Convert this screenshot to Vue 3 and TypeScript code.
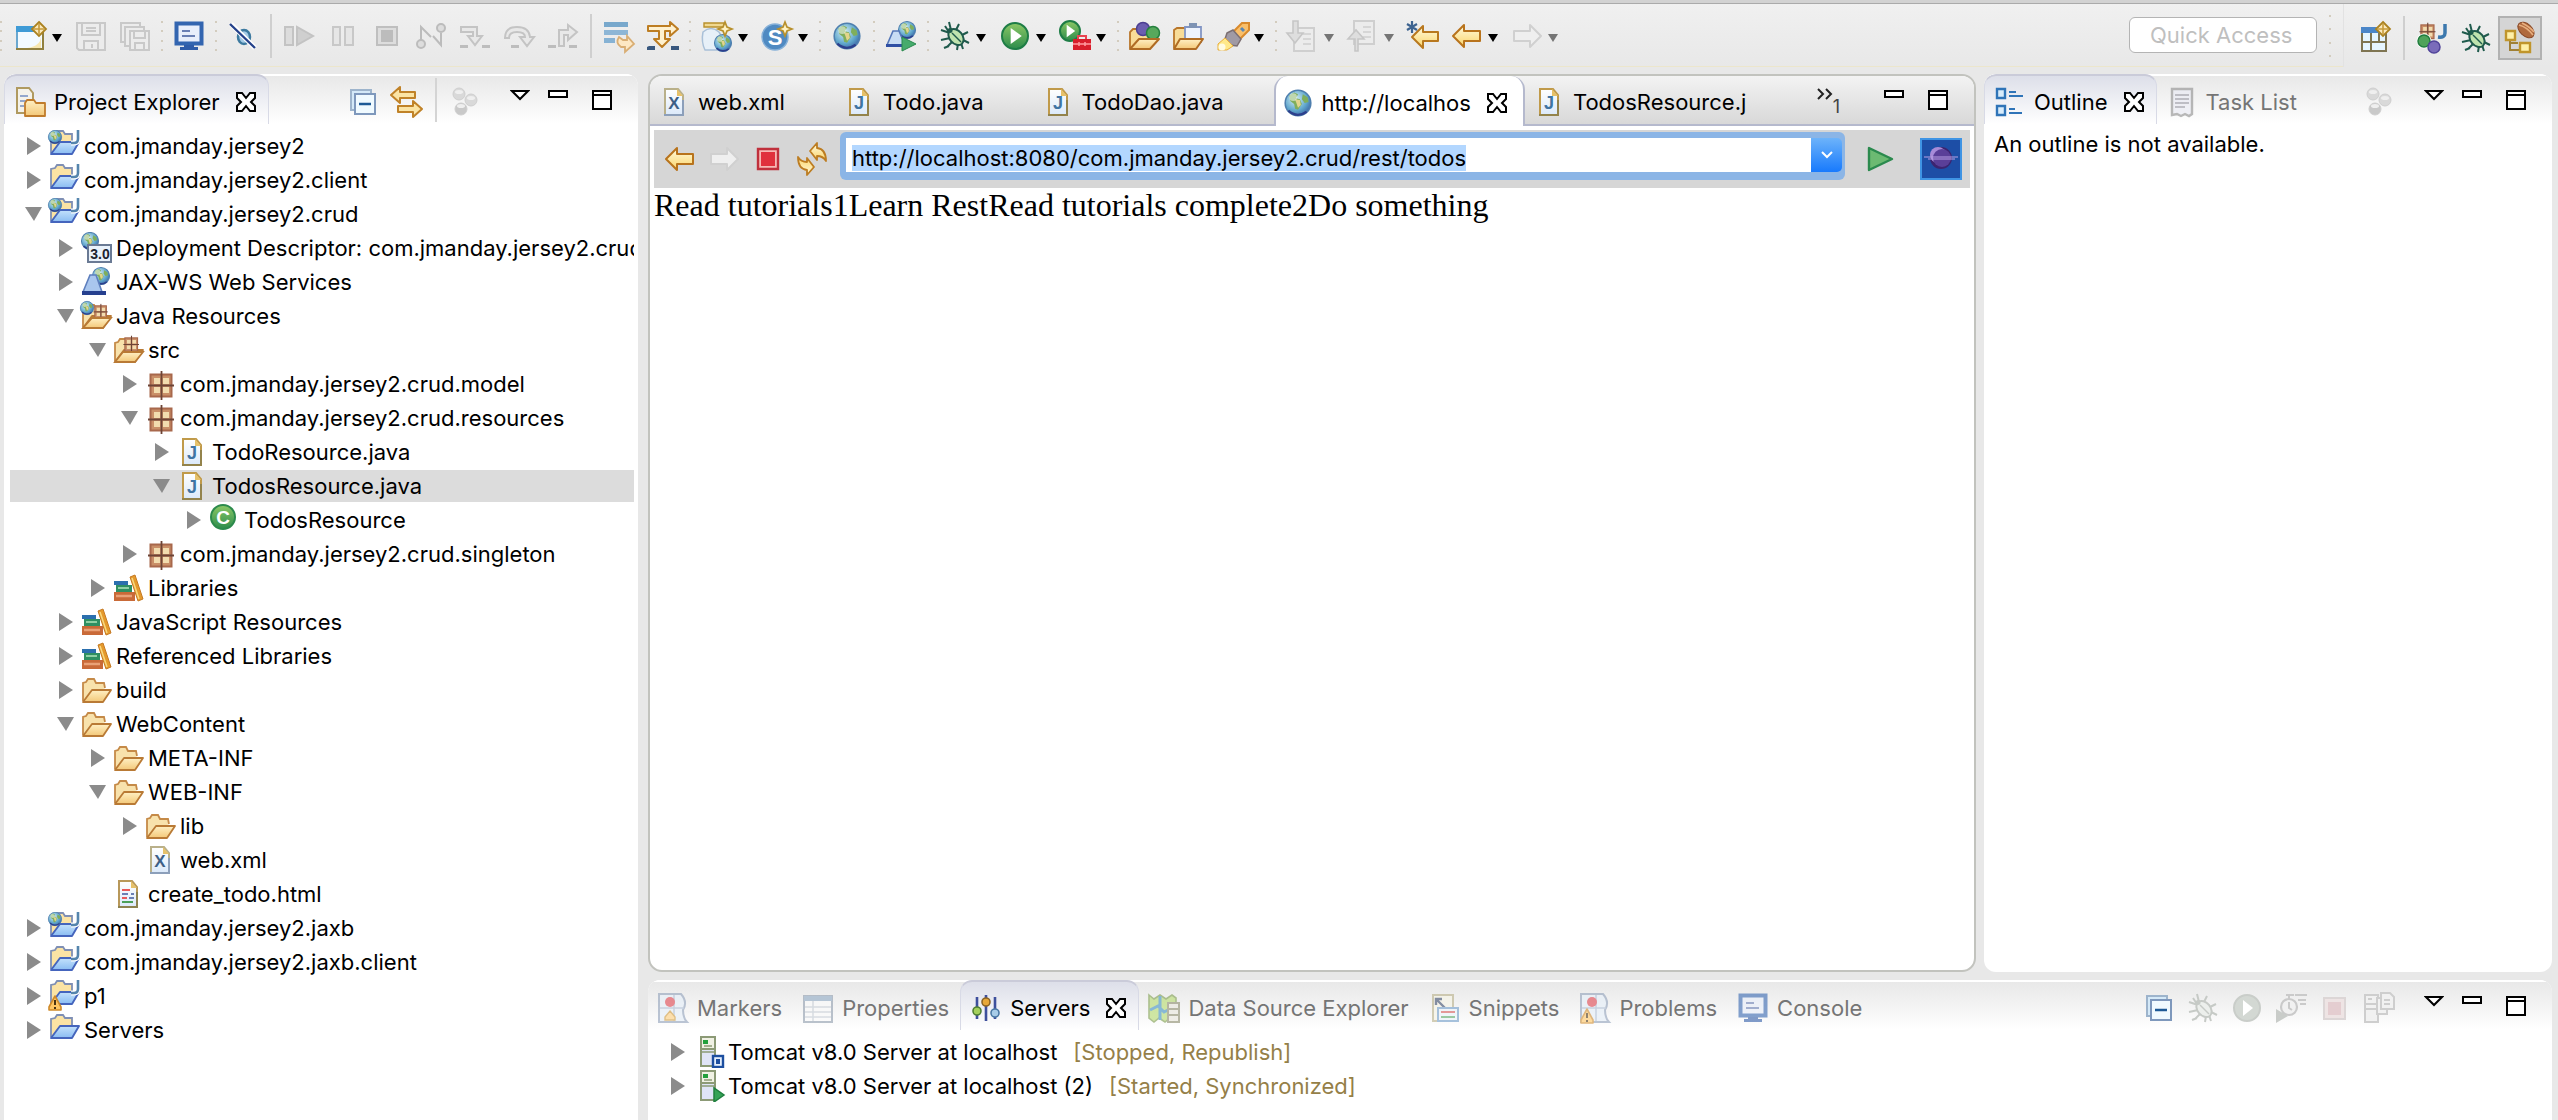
<script setup lang="ts">
import { onMounted, ref } from 'vue'

interface ToolItem {
  kind: 'button' | 'dots' | 'line'
  icon?: string
  label?: string
  menu?: boolean
  disabled?: boolean
}
interface TreeNode {
  label: string
  icon: string
  level: number
  state: 'open' | 'closed' | 'leaf'
  selected?: boolean
}
interface Tab {
  label: string
  icon: string
  active?: boolean
}

/* ---------- icon artwork, drawn on a 32 x 32 grid ---------- */
const letter = (ch: string, x: number, y: number, size: number, fill: string, family = 'Liberation Sans') =>
  `<text x="${x}" y="${y}" font-size="${size}" font-weight="700" text-anchor="middle" fill="${fill}" font-family="${family}, sans-serif">${ch}</text>`
const globe = (x: number, y: number, r: number) =>
  `<g transform="translate(${x} ${y}) scale(${r / 14})"><circle r="13.3" fill="url(#ic-globe)" stroke="#4f7fae" stroke-width="1.6"/><path d="M-9-8l5-3 4 2-2 4 4 1 2 5-4 6-3-1-1-5-4-3zM5-9l5 3 1 5-4 1-3-4z" fill="#7fae5c"/><path d="M-3-4l5 1 1 5-3 3z" fill="#e2d48c"/><path d="M-10 8q9 8 19 1" stroke="#2d3f8c" stroke-width="2.4" fill="none"/><circle cx="-5" cy="-6" r="4" fill="#fff" opacity=".5"/></g>`
const star = (x: number, y: number, r = 7) =>
  `<path transform="translate(${x} ${y})" d="M0-${r}l2 ${r - 2} ${r - 2} 2-${r - 2} 2-2 ${r - 2}-2-${r - 2}-${r - 2}-2 ${r - 2}-2z" fill="#fff3c4" stroke="#b8902c" stroke-width="1.7"/>`
const diamond = (x: number, y: number) =>
  `<path d="M${x} ${y - 7}l7 7-7 7-7-7z" fill="#fbe9bc" stroke="#ab8220" stroke-width="1.8"/><path d="M${x} ${y - 5}v10M${x - 5} ${y}h10" stroke="#c79c3a" stroke-width="1.6"/>`
const page = (stroke: string, low: string) =>
  `<path d="M7 3h13l5 6v20H7z" fill="url(#ic-page)" stroke="${stroke}" stroke-width="2"/><path d="M6 29h20M25 14v15" stroke="${low}" stroke-width="2"/><path d="M19 3v7h6z" fill="#e6c16a"/>`
const tanFolder = (dy = 0) =>
  `<g transform="translate(0 ${dy})"><path d="M3 27V9l3-1 2-3h6l2 4h8l1 5" fill="#f8e2ac" stroke="#c58a48" stroke-width="1.8"/><path d="M3 28l9-12h19l-8 12z" fill="url(#ic-tan)" stroke="#b97a35" stroke-width="1.8" stroke-linejoin="round"/></g>`
const blueFolder =
  `<path d="M3 23V5l4-1 2-3h6l2 3h7v8" fill="#fbe3a4" stroke="#7f8fb4" stroke-width="1.8"/><path d="M3 24l9-12h19l-7 12z" fill="url(#ic-blue)" stroke="#4565bd" stroke-width="1.9" stroke-linejoin="round"/>`
const projectJ = `<path d="M30 0v9q0 4-4 4h-3" fill="none" stroke="#fff" stroke-width="5"/><path d="M30 0v9q0 4-4 4h-3" fill="none" stroke="#5585ad" stroke-width="2.6"/>`
const pack = (s: number, x: number, y: number) =>
  `<g transform="translate(${x} ${y}) scale(${s})"><rect x="1.500" y="1.500" width="21" height="22" fill="#c98f68" stroke="#a8684c" stroke-width="2"/><path d="M5 5h6v6H5zM14 5h6v6h-6zM5 14h6v6H5zM14 14h6v6h-6z" fill="#f2dcae"/><path d="M12.500-2v29M-1 12.500h26" stroke="#6d4436" stroke-width="1.800"/></g>`
const bug = (ink: string, body: string) =>
  `<g fill="none" stroke="${ink}" stroke-width="2"><path d="M10 2l2 8M20 4l-3 6M2 10l9 3M2 20l9-2M8 27l5-5M18 30l1-6M24 29l-2-6M30 23l-6-3M29 12l-6 3M5 28l5-2M10 12l-4-6"/><ellipse cx="17" cy="17" rx="6.500" ry="9" transform="rotate(-40 17 17)" fill="${body}"/><path d="M13 13l9 9" stroke-width="1.400"/></g><circle cx="11" cy="10.500" r="2.500" fill="${ink}"/>`
const play = (x: number, y: number, r: number) =>
  `<circle cx="${x}" cy="${y}" r="${r}" fill="url(#ic-green)" stroke="#1e7d46" stroke-width="2"/><path d="M${x - r * 0.33} ${y - r * 0.62}l${r * 0.85} ${r * 0.62}-${r * 0.85} ${r * 0.62}z" fill="#fff"/>`
const books = `<rect x="2" y="9" width="14" height="4" fill="#2b6fae"/><rect x="4" y="13" width="16" height="7" fill="#2f8f62"/><path d="M6 16h11" stroke="#8fd0a4" stroke-width="2"/><rect x="2" y="20" width="21" height="9" fill="#c96a38"/><path d="M4 24h16" stroke="#e9a176" stroke-width="2.500"/><path d="M18 5l5-2 8 24-5 2z" fill="#e59a2c" stroke="#c67a24"/><path d="M20 6l7 21" stroke="#f8d880" stroke-width="1.500"/>`
const server = `<path d="M5 1h14v12H5z" fill="#f0f1e4" stroke="#8c9a76" stroke-width="2"/><rect x="7" y="4" width="5" height="4" fill="#23a03c"/><path d="M5 13h14v17H5z" fill="#dfe4f6" stroke="#8c9a76" stroke-width="2"/><path d="M5 16h14M8 10h8" stroke="#8c9a76" stroke-width="1.500"/>`
const leftArrow = (stroke: string, fill: string) =>
  `<path d="M2 16L13 5v6h16v10H13v6z" fill="${fill}" stroke="${stroke}" stroke-width="2" stroke-linejoin="round"/>`
const rightArrow = (stroke: string, fill: string) =>
  `<path d="M30 16L19 5v6H3v10h16v6z" fill="${fill}" stroke="${stroke}" stroke-width="2" stroke-linejoin="round"/>`
const dropNote = (flip: boolean) =>
  `<path d="M7 ${flip ? 1 : 8}h20v23H7z" fill="#ececec" stroke="#cfcfcf" stroke-width="2"/><path d="M16 ${flip ? 7 : 14}h8M16 ${flip ? 12 : 19}h8M16 ${flip ? 17 : 24}h8" stroke="#d6d6d6" stroke-width="2"/>` +
  (flip
    ? `<path d="M8 31V19H1l8-9 8 9h-6v12z" fill="#dedede" stroke="#c6c6c6" stroke-width="1.600"/>`
    : `<path d="M6 1v12H0l8 10 8-10h-5V1z" fill="#dedede" stroke="#c6c6c6" stroke-width="1.600"/>`)
const monitor = `<rect x="3.500" y="3.500" width="25" height="20" fill="#e8eefb" stroke="#3365b0" stroke-width="4"/><path d="M9 11h8M9 16h13" stroke="#6a7fb4" stroke-width="2"/><path d="M11 25h10v2H11zM7 27h18v3H7z" fill="#2f5ca8"/>`
const marker = `<path d="M2 2h22q7 8 2 16 0 8 4 12H2z" fill="#e4eef8" stroke="#8fa0ba" stroke-width="2"/><path d="M3 16h24M17 3v26" stroke="#a9b9d0" stroke-width="1.500"/><circle cx="13" cy="10" r="5" fill="#e0444e"/>`
const warn = (x: number, y: number) =>
  `<path d="M${x} ${y}l6 11v3h-12v-3z" fill="#ffc663" stroke="#cf8a2a" stroke-width="1.600" stroke-linejoin="round"/><path d="M${x} ${y + 4}v5M${x} ${y + 11}v2" stroke="#4a3212" stroke-width="2"/>`
const curl = `<path d="M14 8l7-8v5q9 1 9 13-3-5-9-5v4z" fill="url(#ic-gold)" stroke="#bd7d22" stroke-width="1.800" stroke-linejoin="round"/>`

const icons: Record<string, string> = {
  newWizard: `<path d="M2 8h26v21H2z" fill="#f3faff" stroke="#91803e" stroke-width="2"/><path d="M2 8v20" stroke="#6aa7cf" stroke-width="2"/><path d="M1 6h23v6H1z" fill="#3f9bd6"/><path d="M26 16q0 10-14 12h14z" fill="#f7e7b0"/>${diamond(24, 9)}`,
  save: `<g fill="#ececec" stroke="#c9c9c9" stroke-width="2"><path d="M2 3h28v27H4l-2-2z"/><path d="M7 3h18v12H7zM9 21h14v9H9z"/><path d="M11 8h10M11 11h10M17 24v4"/></g>`,
  saveAll: `<g fill="#ececec" stroke="#c9c9c9" stroke-width="2"><path d="M2 3h19v19H2z"/><path d="M6 7h19v19H6z"/><path d="M11 11h19v19H11z"/><path d="M15 11h11v7H15zM16 23h9v7h-9z"/></g>`,
  monitor,
  skip: `<ellipse cx="17" cy="17" rx="6" ry="7" fill="#a5cbe6" stroke="#3d7aa0" stroke-width="2.500"/><path d="M4 4l24 24" stroke="#fff" stroke-width="5"/><path d="M3 4l25 24" stroke="#24418a" stroke-width="2.400"/>`,
  resume: `<g fill="#dcdcdc" stroke="#c3c3c3" stroke-width="2"><path d="M2 7h8v18H2z"/><path d="M14 7v18l16-9z" fill="#cfcfcf"/></g>`,
  pause: `<g fill="#e6e6e6" stroke="#c8c8c8" stroke-width="2"><path d="M6 7h7v18H6zM18 7h8v18h-8z"/></g>`,
  stopOff: `<path d="M6 7h20v18H6z" fill="#ddd" stroke="#bfbfbf" stroke-width="2"/><path d="M10 10h12v12H10z" fill="#bcbcbc"/>`,
  disconnect: `<g fill="none" stroke="#bcbcbc" stroke-width="2"><path d="M6 20V7l10 10M26 13v12L18 16"/><circle cx="6" cy="24" r="4" fill="#ddd"/><circle cx="26" cy="8" r="4" fill="#ddd"/></g>`,
  stepInto: `<g fill="#e8e8e8" stroke="#c4c4c4" stroke-width="2"><path d="M2 7h16v9h5l-7 9-7-9h5v-4H2z"/></g><path d="M1 25h8v3H1zM23 25h8v3h-8z" fill="#bdbdbd"/>`,
  stepOver: `<path d="M2 18Q2 7 14 7t13 10h4l-7 9-7-9h5q0-5-8-5t-8 6z" fill="#e8e8e8" stroke="#c4c4c4" stroke-width="2"/><path d="M8 25h8v3H8z" fill="#bdbdbd"/>`,
  stepReturn: `<path d="M12 26V10h9V5l9 7-9 8v-5h-4v11z" fill="#e8e8e8" stroke="#c4c4c4" stroke-width="2"/><path d="M1 25h8v3H1zM22 25h8v3h-8z" fill="#bdbdbd"/>`,
  dropFrame: `<path d="M1 2h24v5H1z" fill="#78a8cc"/><path d="M1 10h24v5H1z" fill="#8db6d6"/><path d="M1 18h11v5H1z" fill="#86b2d4"/><path d="M16 17q-4 6 2 10h4v5l9-8-7-8v4h-4z" fill="#fde8c4" stroke="#d9ae74" stroke-width="1.800"/>`,
  stepFilter: `<path d="M1 6h22V2l8 7-8 7v-5h-5v8h5l-8 8-8-8h5v-8H1z" fill="#fff1cf" stroke="#bd7d22" stroke-width="2" stroke-linejoin="round"/><path d="M0 27l2-1h6v4H0zM24 26h8v4h-8z" fill="#39587f"/>`,
  newWeb: `<path d="M3 3h20v4H3z" fill="#f0d890" stroke="#b8902c" stroke-width="1.400"/><path d="M2 12q8-7 16 0l5 8-3 10H4q-4-8-2-18z" fill="#e7f0f8" stroke="#a9c0d8" stroke-width="1.500"/>${globe(22, 23, 9)}${star(24, 9)}`,
  newServlet: `<circle cx="14" cy="17" r="13" fill="#4f8ac2" stroke="#86b0d8" stroke-width="1.500"/>${letter('S', 14, 25, 22, '#fff')}${star(24, 9)}`,
  globe: globe(16, 16, 13.5),
  wsLaunch: `${globe(22, 10, 9)}<path d="M2 25L8 11h6l6 14z" fill="#c8dcf4" stroke="#5577b8" stroke-width="1.600"/><path d="M1 24h16v3H1z" fill="#2f4fa4"/><path d="M17 17v14l14-7z" fill="#46ab6c" stroke="#2b8a4e"/>`,
  bug: bug('#1f5a4c', '#bfe3ae'),
  run: play(16, 16, 13),
  runExt: `${play(11, 11, 10)}<path d="M14 19h18v11H14z" fill="#d81e2c"/><path d="M19 19v-3h8v3" fill="none" stroke="#e84450" stroke-width="2"/><path d="M14 24h18M20 22v4M26 22v4" stroke="#ff9ba0" stroke-width="1.500"/>`,
  openType: `<path d="M1 28V12l3-3h8l3 4h12v6" fill="#f8dc98" stroke="#b9762a" stroke-width="1.800"/><circle cx="14" cy="9" r="6.500" fill="#6b5eb0" stroke="#4c3f92" stroke-width="1.500"/><circle cx="24" cy="13" r="6.500" fill="#57a85c" stroke="#25803e" stroke-width="1.500"/><path d="M1 29l9-10h20l-9 10z" fill="url(#ic-tan)" stroke="#b06c24" stroke-width="2" stroke-linejoin="round"/>`,
  openTask: `<path d="M1 28V10l3-2h8l3 4h12v8" fill="#f8dc98" stroke="#b9762a" stroke-width="1.800"/><path d="M12 7h16v15H12z" fill="#eef3fd" stroke="#8295c4" stroke-width="1.800"/><path d="M16 3h8v5h-8z" fill="#7e93b4"/><path d="M1 29l6-10h23l-7 10z" fill="url(#ic-tan)" stroke="#b06c24" stroke-width="2" stroke-linejoin="round"/>`,
  rocket: `<path d="M16 12L25 3h7v7L22 20z" fill="#f9bf6a" stroke="#d98a2c" stroke-width="2"/><path d="M10 13l6-3 8 9-4 7-7-1-5-6z" fill="#a09aa4" stroke="#7c6f72" stroke-width="1.500"/><path d="M8 18l8 8-6 4H1v-6z" fill="#ffe98a" stroke="#e8ae3c"/><circle cx="5" cy="27" r="3.500" fill="#fffbe0"/><path d="M24 8l3 3" stroke="#5a88b4" stroke-width="3"/>`,
  nextNote: dropNote(false),
  prevNote: dropNote(true),
  lastEdit: `<path d="M5 17L16 6v6h15v9H16v7z" fill="url(#ic-gold)" stroke="#b8781e" stroke-width="2" stroke-linejoin="round"/><path d="M5 1v12M0 4l10 6M10 4L0 10" stroke="#3d6390" stroke-width="2.200"/>`,
  back: leftArrow('#b8731c', 'url(#ic-gold)'),
  forward: rightArrow('#d0d0d0', '#efefef'),
  perspective: `<path d="M2 8h24v21H2z" fill="#e5f5ff" stroke="#7f7552" stroke-width="2"/><path d="M1 5h24v6H1z" fill="#4b86c8"/><path d="M11 11v18M2 20h24M19 11v9" stroke="#7f7552" stroke-width="2"/>${diamond(23, 7)}`,
  javaPersp: `${pack(0.62, 4, 2)}<path d="M29 2v9q0 5-7 4" fill="none" stroke="#3c78ad" stroke-width="3.500"/><circle cx="8" cy="19" r="7.500" fill="#fff"/><circle cx="8" cy="19" r="6" fill="#4fa35a" stroke="#207c3e" stroke-width="1.500"/><circle cx="18" cy="25" r="6" fill="#7a6cba" stroke="#51449a" stroke-width="1.500"/>`,
  eePersp: `<path d="M6 15v13h10M6 21h8" fill="none" stroke="#a08034" stroke-width="2"/><path d="M2 9h9v9H2zM16 21h10v9H16z" fill="#fff0a8" stroke="#c0952c" stroke-width="2.400"/><ellipse cx="22" cy="8" rx="6" ry="9.500" transform="rotate(-48 22 8)" fill="#b06a3e" stroke="#8a4a28"/><path d="M15 3q8 2 14 10M18 1q8 4 12 9" stroke="#e8b080" stroke-width="1.600" fill="none"/>`,
  explorer: `<path d="M3 2h12l4 5v20H3z" fill="#f4f2ea" stroke="#b09a60" stroke-width="2"/><path d="M6 10h8M6 15h6M6 20h4" stroke="#93a7cc" stroke-width="2"/><path d="M11 30V17l2-3h7l2 3h9v13z" fill="url(#ic-tan)" stroke="#c07c2c" stroke-width="1.800" stroke-linejoin="round"/>`,
  collapse: `<path d="M4 4h20v20H4z" fill="#d4e9f8" stroke="#9db4cc" stroke-width="2"/><path d="M8 8h20v20H8z" fill="#f0faff" stroke="#7e98bc" stroke-width="2"/><path d="M12 18h12" stroke="#1d5a96" stroke-width="2.500"/>`,
  link: `<path d="M0 9l9-8v5h15v6H9v5z" fill="#fbe4a4" stroke="#c08228" stroke-width="2" stroke-linejoin="round"/><path d="M31 23l-9-8v5H7v6h15v5z" fill="#fbe4a4" stroke="#c08228" stroke-width="2" stroke-linejoin="round"/>`,
  focus: `<g fill="#d9d9d9" stroke="#cfcfcf"><circle cx="10" cy="8" r="6"/><circle cx="22" cy="14" r="6"/><circle cx="12" cy="23" r="6" fill="#c9c9c9"/></g><g fill="#efefef"><ellipse cx="10" cy="6" rx="4" ry="2"/><ellipse cx="22" cy="12" rx="4" ry="2"/><ellipse cx="12" cy="20" rx="4" ry="2"/></g>`,
  webProject: `${blueFolder}${projectJ}${globe(7, 7, 7)}`,
  javaProject: `${blueFolder}${projectJ}`,
  warnProject: `${blueFolder}${projectJ}${warn(7, 16)}`,
  project: blueFolder,
  descriptor: `${globe(10, 9, 9)}<rect x="8" y="13" width="23" height="17" fill="#e9f2fb" stroke="#6a7a94" stroke-width="2"/>${letter('3.0', 20, 27, 14, '#1c2430')}`,
  jaxws: `${globe(21, 10, 9)}<path d="M3 26L10 9h6l6 17z" fill="#a9c6ee" stroke="#5e7fbe" stroke-width="1.600"/><path d="M2 25h24v4H2z" fill="#26408f"/>`,
  javaRes: `${tanFolder()}${pack(0.55, 14, 5)}<path d="M3 28l9-10h19l-8 10z" fill="url(#ic-tan)" stroke="#b97a35" stroke-width="1.800"/>${globe(7, 8, 7)}`,
  srcFolder: `${tanFolder()}${pack(0.6, 12, 3)}<path d="M3 28l8-10h20l-8 10z" fill="url(#ic-tan)" stroke="#b97a35" stroke-width="1.800"/>`,
  package: pack(1, 5, 5),
  javaFile: `${page('#c09a4a', '#93834c')}${letter('J', 16, 23, 18, '#3f74a3')}`,
  xmlFile: `${page('#b9b08a', '#8c9fba')}${letter('X', 16, 23, 17, '#3d5f86')}`,
  htmlFile: `${page('#b8985a', '#8d8250')}<path d="M10 12h8M10 20h5" stroke="#e85a5a" stroke-width="2"/><path d="M10 16h6M19 16h3M17 20h5" stroke="#6a7fb4" stroke-width="2"/><path d="M10 24h11" stroke="#4ba05a" stroke-width="2"/>`,
  classFile: `<circle cx="15" cy="13" r="12" fill="url(#ic-green)" stroke="#2c8a4c" stroke-width="2"/>${letter('C', 15, 20, 19, '#fff')}`,
  books,
  folder: tanFolder(),
  outline: `<g fill="#d8ecfb" stroke="#2f74b8" stroke-width="2.400"><path d="M3 3h8v9H3zM3 20h8v9H3z"/></g><path d="M15 6h7M15 10h14M15 23h6M15 27h13" stroke="#2f74b8" stroke-width="2"/>`,
  taskList: `<path d="M6 3h20v25l-3 2-4-2-4 2-4-2-5 1z" fill="#e9eaf4" stroke="#8c8c8c" stroke-width="2.400"/><path d="M9 9h14M9 13h14M9 17h14M9 21h10" stroke="#80808c" stroke-width="1.600"/>`,
  stop: `<path d="M6 6h20v20H6z" fill="#f6b8b4" stroke="#c0303c" stroke-width="2.400"/><path d="M9 9h14v14H9z" fill="#e0303c"/>`,
  refresh: `${curl}<g transform="rotate(180 16 16)">${curl}</g>`,
  go: `<path d="M5 5v22l23-11z" fill="#6cba72" stroke="#2b8a4e" stroke-width="2.400" stroke-linejoin="round"/>`,
  markers: `${marker}<path d="M13 19l5 6v3H8v-3z" fill="#ffcf7c" stroke="#cf9a3a" stroke-width="1.400"/>`,
  problems: `${marker}${warn(8, 17)}`,
  properties: `<path d="M2 4h28v26H2z" fill="#fbfbfb" stroke="#8e9cac" stroke-width="2"/><path d="M2 4h28v5H2z" fill="#8ea8c4"/><path d="M11 9v20M3 15h26M3 20h26M3 25h26" stroke="#c2cad4" stroke-width="1.500"/>`,
  servers: `<path d="M7 5v22M16 3v26M25 5v22" stroke="#3d4f9c" stroke-width="2.600"/><circle cx="7" cy="19" r="4" fill="#a4d05c" stroke="#4f7f34" stroke-width="1.600"/><circle cx="16" cy="10" r="4" fill="#e8a838" stroke="#8c6424" stroke-width="1.600"/><circle cx="25" cy="21" r="4" fill="#a8cce8" stroke="#4a78a4" stroke-width="1.600"/>`,
  dataSource: `<path d="M1 3l5 4 6-4 6 4 6-4 4 3v22l-6-2-5 4-6-4-5 4-5-4z" fill="#b4da6c" stroke="#7c9c4c" stroke-width="1.600"/><path d="M2 18l8-4 6 6 6-3M12 4v24" stroke="#3f8fc0" stroke-width="3" fill="none"/><path d="M20 11h11v19H20z" fill="#e8e6da" stroke="#8a8a6c" stroke-width="2"/><path d="M21 17h9M21 23h9" stroke="#8a8a6c" stroke-width="2"/>`,
  snippets: `<path d="M4 3h20v26H4z" fill="#f6f3e4" stroke="#b8b088" stroke-width="2"/><path d="M7 7l9 9M7 13V7h6" fill="none" stroke="#3a4a6c" stroke-width="2.400"/><path d="M9 16h20v13H9z" fill="#eaf3fc" stroke="#6f9cc8" stroke-width="2"/><path d="M12 20h14" stroke="#d85a5a" stroke-width="2"/><path d="M12 25h14" stroke="#5aa86a" stroke-width="2"/>`,
  bugOff: bug('#c6cac6', '#ecefec'),
  runOff: `<circle cx="16" cy="16" r="13" fill="#d3d8d3" stroke="#c9cdc9" stroke-width="2"/><path d="M12 8l10 8-10 8z" fill="#fff"/>`,
  profileOff: `<circle cx="14" cy="15" r="8" fill="#f1f1f1" stroke="#cacaca" stroke-width="2.200"/><path d="M14 10v6l3 2M11 3h8M14 3v4M20 3h12M23 8h8M25 12h6" stroke="#cacaca" stroke-width="2" fill="none"/><path d="M1 17v14l12-7z" fill="#c9ccc9"/>`,
  stopPale: `<path d="M5 6h21v21H5z" fill="#eee4e4" stroke="#dcd6d6" stroke-width="2"/><path d="M9 10h13v13H9z" fill="#e4cdd0"/>`,
  publishOff: `<g fill="#f1f1f1" stroke="#cecece" stroke-width="2"><path d="M2 3h13v27H2z"/><path d="M2 12h13M2 17h13M5 7h4"/><path d="M14 6h10v16H14z"/><path d="M18 1h9l4 4v12H18z"/><path d="M21 8h6M21 12h6"/></g>`,
  serverStopped: `${server}<rect x="17" y="20" width="10" height="11" fill="#e4eefc" stroke="#1d4fa0" stroke-width="2.400"/><rect x="20" y="23" width="4" height="5" fill="#1d4fa0"/>`,
  serverStarted: `${server}<path d="M18 18v14l10-7z" fill="#35a356" stroke="#1f7f3e" stroke-width="1.500"/>`,
}

/* ---------- window content ---------- */
const b = (icon: string, label: string, menu = false, disabled = false): ToolItem => ({ kind: 'button', icon, label, menu, disabled })
const dots: ToolItem = { kind: 'dots' }
const line: ToolItem = { kind: 'line' }
const tools: ToolItem[] = [
  dots,
  b('newWizard', 'New', true),
  b('save', 'Save', false, true),
  b('saveAll', 'Save All', false, true),
  dots,
  b('monitor', 'Open Console'),
  dots,
  b('skip', 'Skip All Breakpoints'),
  line,
  b('resume', 'Resume', false, true),
  b('pause', 'Suspend', false, true),
  b('stopOff', 'Terminate', false, true),
  b('disconnect', 'Disconnect', false, true),
  b('stepInto', 'Step Into', false, true),
  b('stepOver', 'Step Over', false, true),
  b('stepReturn', 'Step Return', false, true),
  line,
  b('dropFrame', 'Drop to Frame'),
  b('stepFilter', 'Use Step Filters'),
  dots,
  b('newWeb', 'New Web Project', true),
  b('newServlet', 'New Servlet', true),
  dots,
  b('globe', 'Open Web Browser'),
  dots,
  b('wsLaunch', 'Web Services Explorer'),
  dots,
  b('bug', 'Debug', true),
  b('run', 'Run', true),
  b('runExt', 'External Tools', true),
  dots,
  b('openType', 'Open Type'),
  b('openTask', 'Open Task'),
  b('rocket', 'Search', true),
  dots,
  b('nextNote', 'Next Annotation', true, true),
  b('prevNote', 'Previous Annotation', true, true),
  b('lastEdit', 'Last Edit Location'),
  b('back', 'Back', true),
  b('forward', 'Forward', true, true),
]

const n = (level: number, icon: string, label: string, state: TreeNode['state'] = 'closed', selected = false): TreeNode => ({ level, icon, label, state, selected })
const tree: TreeNode[] = [
  n(0, 'webProject', 'com.jmanday.jersey2'),
  n(0, 'javaProject', 'com.jmanday.jersey2.client'),
  n(0, 'webProject', 'com.jmanday.jersey2.crud', 'open'),
  n(1, 'descriptor', 'Deployment Descriptor: com.jmanday.jersey2.crud'),
  n(1, 'jaxws', 'JAX-WS Web Services'),
  n(1, 'javaRes', 'Java Resources', 'open'),
  n(2, 'srcFolder', 'src', 'open'),
  n(3, 'package', 'com.jmanday.jersey2.crud.model'),
  n(3, 'package', 'com.jmanday.jersey2.crud.resources', 'open'),
  n(4, 'javaFile', 'TodoResource.java'),
  n(4, 'javaFile', 'TodosResource.java', 'open', true),
  n(5, 'classFile', 'TodosResource'),
  n(3, 'package', 'com.jmanday.jersey2.crud.singleton'),
  n(2, 'books', 'Libraries'),
  n(1, 'books', 'JavaScript Resources'),
  n(1, 'books', 'Referenced Libraries'),
  n(1, 'folder', 'build'),
  n(1, 'folder', 'WebContent', 'open'),
  n(2, 'folder', 'META-INF'),
  n(2, 'folder', 'WEB-INF', 'open'),
  n(3, 'folder', 'lib'),
  n(3, 'xmlFile', 'web.xml', 'leaf'),
  n(2, 'htmlFile', 'create_todo.html', 'leaf'),
  n(0, 'webProject', 'com.jmanday.jersey2.jaxb'),
  n(0, 'javaProject', 'com.jmanday.jersey2.jaxb.client'),
  n(0, 'warnProject', 'p1'),
  n(0, 'project', 'Servers'),
]

const editorTabs: Tab[] = [
  { label: 'web.xml', icon: 'xmlFile' },
  { label: 'Todo.java', icon: 'javaFile' },
  { label: 'TodoDao.java', icon: 'javaFile' },
  { label: 'http://localhos', icon: 'globe', active: true },
  { label: 'TodosResource.j', icon: 'javaFile' },
]
const bottomTabs: Tab[] = [
  { label: 'Markers', icon: 'markers' },
  { label: 'Properties', icon: 'properties' },
  { label: 'Servers', icon: 'servers', active: true },
  { label: 'Data Source Explorer', icon: 'dataSource' },
  { label: 'Snippets', icon: 'snippets' },
  { label: 'Problems', icon: 'problems' },
  { label: 'Console', icon: 'monitor' },
]
const outlineTabs: Tab[] = [
  { label: 'Outline', icon: 'outline', active: true },
  { label: 'Task List', icon: 'taskList' },
]
const serverTools = ['collapse', 'bugOff', 'runOff', 'profileOff', 'stopPale', 'publishOff']
const servers = [
  { name: 'Tomcat v8.0 Server at localhost', status: '[Stopped, Republish]', icon: 'serverStopped' },
  { name: 'Tomcat v8.0 Server at localhost (2)', status: '[Started, Synchronized]', icon: 'serverStarted' },
]

const url = ref('http://localhost:8080/com.jmanday.jersey2.crud/rest/todos')
const urlBox = ref<HTMLInputElement | null>(null)
onMounted(() => {
  urlBox.value?.focus({ preventScroll: true })
  urlBox.value?.select()
})
</script>

<template>
  <div class="app">
    <svg class="defs" aria-hidden="true">
      <defs>
        <radialGradient id="ic-globe" cx=".4" cy=".35" r=".75"><stop offset="0" stop-color="#d8f0f4" /><stop offset=".6" stop-color="#5fa6cc" /><stop offset="1" stop-color="#34579c" /></radialGradient>
        <linearGradient id="ic-page" x1="0" y1="0" x2="0" y2="1"><stop offset="0" stop-color="#fff" /><stop offset="1" stop-color="#dbe9fa" /></linearGradient>
        <linearGradient id="ic-tan" x1="0" y1="0" x2="0" y2="1"><stop offset="0" stop-color="#fff0c4" /><stop offset="1" stop-color="#f3c878" /></linearGradient>
        <linearGradient id="ic-blue" x1="0" y1="0" x2="0" y2="1"><stop offset="0" stop-color="#c4e2fc" /><stop offset="1" stop-color="#8abcf2" /></linearGradient>
        <linearGradient id="ic-green" x1="0" y1="0" x2="0" y2="1"><stop offset="0" stop-color="#8cc865" /><stop offset="1" stop-color="#2c8c4c" /></linearGradient>
        <linearGradient id="ic-gold" x1="0" y1="0" x2="0" y2="1"><stop offset="0" stop-color="#fffbe0" /><stop offset="1" stop-color="#fbd468" /></linearGradient>
      </defs>
    </svg>

    <header class="toolbar">
      <div class="tools">
        <template v-for="(t, i) in tools" :key="i">
          <span v-if="t.kind === 'dots'" class="dots" :class="{ first: i === 0 }"><i /><i /><i /><i /></span>
          <span v-else-if="t.kind === 'line'" class="line" />
          <button v-else class="tool" :class="{ menu: t.menu }" :disabled="t.disabled" :aria-label="t.label">
            <svg class="icon" viewBox="0 0 32 32" v-html="icons[t.icon!]" />
            <svg v-if="t.menu" class="caret" viewBox="0 0 10 8"><path d="M0 0h10L5 8z" /></svg>
          </button>
        </template>
        <input class="quick" type="text" placeholder="Quick Access" aria-label="Quick Access" />
        <span class="dots wide"><i /><i /><i /><i /></span>
      </div>
      <nav class="perspectives" aria-label="Perspectives">
        <button class="tool" aria-label="Open Perspective"><svg class="icon" viewBox="0 0 32 32" v-html="icons.perspective" /></button>
        <span class="line" />
        <button class="tool" aria-label="Java"><svg class="icon" viewBox="0 0 32 32" v-html="icons.javaPersp" /></button>
        <button class="tool" aria-label="Debug perspective"><svg class="icon" viewBox="0 0 32 32" v-html="icons.bug" /></button>
        <button class="tool pressed" aria-label="Java EE"><svg class="icon" viewBox="0 0 32 32" v-html="icons.eePersp" /></button>
      </nav>
    </header>

    <main class="workbench">
      <section class="view explorer">
        <div class="view-head">
          <div class="tab active">
            <svg class="icon" viewBox="0 0 32 32" v-html="icons.explorer" />
            <button class="tab-label">Project Explorer</button>
            <button class="close" aria-label="Close Project Explorer"><svg viewBox="0 0 20 20"><path d="M1 1h5l4 5 4-5h5v5l-4 4 4 4v5h-5l-4-5-4 5H1v-5l4-4-4-4z" /></svg></button>
          </div>
          <div class="view-tools">
            <button class="mini" aria-label="Collapse All"><svg class="icon" viewBox="0 0 32 32" v-html="icons.collapse" /></button>
            <button class="mini" aria-label="Link with Editor"><svg class="icon" viewBox="0 0 32 32" v-html="icons.link" /></button>
            <span class="head-line" />
            <button class="mini" aria-label="Focus on Active Task" disabled><svg class="icon" viewBox="0 0 32 32" v-html="icons.focus" /></button>
          </div>
          <div class="win">
            <button aria-label="View Menu"><svg viewBox="0 0 20 20"><path d="M2 1h16l-8 8z" /></svg></button>
            <button aria-label="Minimize"><svg viewBox="0 0 20 20"><path d="M1 1h18v6H1z" /></svg></button>
            <button class="max" aria-label="Maximize"><svg viewBox="0 0 20 20"><path d="M1 1h18v18H1zM1 5h18" /></svg></button>
          </div>
        </div>
        <ul class="tree" role="tree">
          <li
            v-for="node in tree"
            :key="node.label"
            role="treeitem"
            :aria-selected="node.selected"
            :class="{ selected: node.selected }"
            :style="{ paddingLeft: 14 + node.level * 32 + 'px' }"
          >
            <span v-if="node.state === 'leaf'" class="twist" />
            <button v-else class="twist" :aria-label="'Toggle ' + node.label">
              <svg viewBox="0 0 20 20"><path :d="node.state === 'open' ? 'M1 3h17l-8 14z' : 'M3 1v18l14-9z'" /></svg>
            </button>
            <svg class="icon" viewBox="0 0 32 32" v-html="icons[node.icon]" />
            <span class="node-label">{{ node.label }}</span>
          </li>
        </ul>
      </section>

      <div class="right">
        <div class="upper">
          <section class="editor">
            <div class="editor-head">
              <div v-for="t in editorTabs" :key="t.label" class="etab" :class="{ active: t.active }">
                <svg class="icon" viewBox="0 0 32 32" v-html="icons[t.icon]" />
                <button class="tab-label">{{ t.label }}</button>
                <button class="close" :aria-label="'Close ' + t.label"><svg viewBox="0 0 20 20"><path d="M1 1h5l4 5 4-5h5v5l-4 4 4 4v5h-5l-4-5-4 5H1v-5l4-4-4-4z" /></svg></button>
              </div>
              <div class="editor-tools">
                <button class="more" aria-label="Show 1 more editor">
                  <svg viewBox="0 0 16 12"><path d="M1 1l5 5-5 5M9 1l5 5-5 5" /></svg><span>1</span>
                </button>
                <div class="win">
                  <button aria-label="Minimize editor"><svg viewBox="0 0 20 20"><path d="M1 1h18v6H1z" /></svg></button>
                  <button class="max" aria-label="Maximize editor"><svg viewBox="0 0 20 20"><path d="M1 1h18v18H1zM1 5h18" /></svg></button>
                </div>
              </div>
            </div>
            <div class="browser-bar">
              <button class="mini" aria-label="Go back"><svg class="icon" viewBox="0 0 32 32" v-html="icons.back" /></button>
              <button class="mini" aria-label="Go forward" disabled><svg class="icon" viewBox="0 0 32 32" v-html="icons.forward" /></button>
              <button class="mini" aria-label="Stop"><svg class="icon" viewBox="0 0 32 32" v-html="icons.stop" /></button>
              <button class="mini" aria-label="Refresh"><svg class="icon" viewBox="0 0 32 32" v-html="icons.refresh" /></button>
              <div class="combo">
                <input ref="urlBox" v-model="url" type="text" spellcheck="false" aria-label="Address" />
                <button aria-label="Show address history"><svg viewBox="0 0 14 10"><path d="M2 2l5 5 5-5" /></svg></button>
              </div>
              <button class="mini go" aria-label="Go"><svg class="icon" viewBox="0 0 32 32" v-html="icons.go" /></button>
              <svg class="eclipse" viewBox="0 0 42 42">
                <rect width="42" height="42" fill="#1d4ea6" /><path d="M1 1h40v40H1z" fill="none" stroke="#3f94e4" stroke-width="2" />
                <circle cx="21" cy="20" r="11" fill="#3c2470" /><circle cx="18" cy="17" r="8" fill="#a78bd8" /><circle cx="22" cy="20" r="9" fill="#5a3f98" />
                <path d="M4 19h34M8 21h27" stroke="#b9a0e4" stroke-width="1" />
              </svg>
            </div>
            <div class="page">Read tutorials1Learn RestRead tutorials complete2Do something</div>
          </section>

          <section class="view outline">
            <div class="view-head">
              <div v-for="t in outlineTabs" :key="t.label" class="tab" :class="{ active: t.active }">
                <svg class="icon" viewBox="0 0 32 32" v-html="icons[t.icon]" />
                <button class="tab-label">{{ t.label }}</button>
                <button v-if="t.active" class="close" :aria-label="'Close ' + t.label"><svg viewBox="0 0 20 20"><path d="M1 1h5l4 5 4-5h5v5l-4 4 4 4v5h-5l-4-5-4 5H1v-5l4-4-4-4z" /></svg></button>
              </div>
              <div class="view-tools">
                <button class="mini" aria-label="Focus on Workweek" disabled><svg class="icon" viewBox="0 0 32 32" v-html="icons.focus" /></button>
              </div>
              <div class="win">
                <button aria-label="Outline menu"><svg viewBox="0 0 20 20"><path d="M2 1h16l-8 8z" /></svg></button>
                <button aria-label="Minimize outline"><svg viewBox="0 0 20 20"><path d="M1 1h18v6H1z" /></svg></button>
                <button class="max" aria-label="Maximize outline"><svg viewBox="0 0 20 20"><path d="M1 1h18v18H1zM1 5h18" /></svg></button>
              </div>
            </div>
            <p class="note">An outline is not available.</p>
          </section>
        </div>

        <section class="view bottom">
          <div class="view-head">
            <div v-for="t in bottomTabs" :key="t.label" class="tab" :class="{ active: t.active }">
              <svg class="icon" viewBox="0 0 32 32" v-html="icons[t.icon]" />
              <button class="tab-label">{{ t.label }}</button>
              <button v-if="t.active" class="close" :aria-label="'Close ' + t.label"><svg viewBox="0 0 20 20"><path d="M1 1h5l4 5 4-5h5v5l-4 4 4 4v5h-5l-4-5-4 5H1v-5l4-4-4-4z" /></svg></button>
            </div>
            <div class="view-tools">
              <button v-for="s in serverTools" :key="s" class="mini" :aria-label="s"><svg class="icon" viewBox="0 0 32 32" v-html="icons[s]" /></button>
            </div>
            <div class="win">
              <button aria-label="Servers menu"><svg viewBox="0 0 20 20"><path d="M2 1h16l-8 8z" /></svg></button>
              <button aria-label="Minimize servers"><svg viewBox="0 0 20 20"><path d="M1 1h18v6H1z" /></svg></button>
              <button class="max" aria-label="Maximize servers"><svg viewBox="0 0 20 20"><path d="M1 1h18v18H1zM1 5h18" /></svg></button>
            </div>
          </div>
          <ul class="tree servers">
            <li v-for="s in servers" :key="s.name">
              <button class="twist" :aria-label="'Toggle ' + s.name"><svg viewBox="0 0 20 20"><path d="M3 1v18l14-9z" /></svg></button>
              <svg class="icon" viewBox="0 0 32 32" v-html="icons[s.icon]" />
              <span class="node-label">{{ s.name }}</span>
              <span class="status">{{ s.status }}</span>
            </li>
          </ul>
        </section>
      </div>
    </main>
  </div>
</template>

<style>
body {
  margin: 0;
}
</style>

<style scoped>
.app {
  display: flex;
  flex-direction: column;
  box-sizing: border-box;
  min-height: 100vh;
  background: #e8e8e8;
  border-top: 3px solid #d2d2d2;
  color: #000;
  font-family: Inter, 'Open Sans', sans-serif;
  font-size: 22px;
  line-height: 32px;
}
.defs {
  position: absolute;
  width: 0;
  height: 0;
}
button,
input {
  margin: 0;
  padding: 0;
  border: 0;
  background: none;
  color: inherit;
  font: inherit;
  outline: none;
}
.icon {
  flex: none;
  display: block;
  width: 32px;
  height: 32px;
  overflow: visible;
}

/* main toolbar */
.toolbar {
  display: flex;
  border-top: 1px solid #aaa;
  background: linear-gradient(#f0f0f0, #e8e8e8);
}
.tools {
  flex: 1;
  display: flex;
  align-items: flex-start;
  min-width: 0;
  padding: 10px 0 8px;
  border-bottom: 1px solid #ece6cc;
}
.tool {
  flex: none;
  display: flex;
  align-items: center;
  box-sizing: border-box;
  width: 44px;
  height: 44px;
  padding: 0 6px;
}
.tool.menu {
  width: 60px;
}
.caret {
  flex: none;
  width: 10px;
  height: 8px;
  margin: 4px 0 0 5px;
}
.tool:disabled .caret {
  opacity: 0.5;
}
.dots {
  flex: none;
  display: flex;
  flex-direction: column;
  align-items: center;
  justify-content: space-between;
  width: 10px;
  height: 30px;
  padding: 7px 0;
}
.dots.first {
  width: 9px;
  align-items: flex-start;
}
.dots i {
  width: 2px;
  height: 2px;
  background: #d3ccbe;
}
.dots.wide {
  width: 26px;
  height: 42px;
  padding: 1px 0;
}
.line {
  flex: none;
  width: 2px;
  height: 44px;
  margin: 0 5px;
  background: #cfcfcf;
}
.quick {
  box-sizing: border-box;
  width: 188px;
  height: 36px;
  margin: 3px 0 0 auto;
  padding: 0 20px;
  border: 1px solid #b4b4b4;
  border-radius: 6px;
  background: #fff;
}
.quick::placeholder {
  color: #bfbfbf;
}
.perspectives {
  flex: none;
  display: flex;
  padding: 12px 16px 0 10px;
  border-left: 1px solid #e2e2e2;
}
.pressed {
  padding: 0 4px;
  border: 2px solid #b2b2b2;
  background: #d5d5d5;
}

/* workbench grid */
.workbench {
  flex: 1;
  display: grid;
  grid-template-columns: minmax(0, 634fr) minmax(0, 1904fr);
  gap: 10px;
  padding: 7px 6px 0 4px;
}
.right {
  display: flex;
  flex-direction: column;
  gap: 8px;
}
.upper {
  flex: 1;
  display: grid;
  grid-template-columns: minmax(0, 1328fr) minmax(0, 568fr);
  gap: 8px;
}

/* views */
.view {
  display: flex;
  flex-direction: column;
  border-radius: 12px;
  background: #fff;
  overflow: hidden;
}
.explorer,
.bottom {
  border-radius: 12px 12px 0 0;
}
.view-head {
  display: flex;
  height: 48px;
  border-top: 2px solid #fff;
  background: linear-gradient(#e8e8e8, #fff);
}
.tab {
  flex: none;
  display: flex;
  align-items: center;
  gap: 8px;
  box-sizing: border-box;
  height: 48px;
  padding: 4px 11px 0 9px;
  color: #757575;
  white-space: nowrap;
}
.tab .icon {
  opacity: 0.6;
}
.tab.active {
  height: 50px;
  margin-top: -2px;
  padding: 4px 12px 0 9px;
  border: 1px solid #d8dae6;
  border-top: 2px solid #cacbd9;
  border-bottom: 0;
  border-radius: 12px 12px 0 0;
  background: linear-gradient(#dddfe9, #fff);
  color: #000;
}
.tab.active .icon {
  opacity: 1;
}
.close {
  flex: none;
  width: 20px;
  height: 20px;
  margin-left: 8px;
}
.close svg,
.win svg {
  display: block;
  width: 20px;
  height: 20px;
  fill: #fff;
  stroke: #000;
  stroke-width: 2;
}
.view-tools {
  display: flex;
  gap: 12px;
  margin-left: auto;
  padding-top: 10px;
}
.mini {
  flex: none;
  width: 32px;
  height: 32px;
}
.head-line {
  width: 2px;
  height: 44px;
  margin-top: -8px;
  background: #d4d4d4;
}
.win {
  display: flex;
  gap: 18px;
  padding: 14px 26px 0 29px;
}
.win button {
  width: 20px;
  height: 20px;
}
.win .max {
  margin-left: 6px;
}

/* trees */
.tree {
  display: flex;
  flex-direction: column;
  gap: 2px;
  margin: 0;
  padding: 6px 4px 18px 6px;
  list-style: none;
}
.tree li {
  display: flex;
  align-items: center;
  height: 32px;
  white-space: nowrap;
  overflow: hidden;
}
.tree .selected {
  background: #dcdcdc;
}
.twist {
  flex: none;
  width: 20px;
  height: 20px;
  margin-right: 4px;
}
.twist svg {
  display: block;
  width: 20px;
  height: 20px;
  fill: #8b8b8b;
}
.node-label {
  margin-left: 4px;
}
.servers {
  padding-left: 20px;
}
.servers .twist {
  margin-right: 8px;
}
.servers .node-label {
  margin-left: 0;
}
.status {
  margin-left: 16px;
  color: #957f48;
}

/* editor area */
.editor {
  display: flex;
  flex-direction: column;
  border: 2px solid #c2c3be;
  border-radius: 14px;
  background: #fff;
  overflow: hidden;
}
.editor-head {
  display: flex;
  height: 50px;
  background: linear-gradient(#f3f3f3, #d7d7d7);
}
.etab {
  flex: none;
  display: flex;
  align-items: center;
  gap: 8px;
  box-sizing: border-box;
  height: 50px;
  padding: 4px 14px 0 8px;
  border-bottom: 2px solid #b5b9cd;
  white-space: nowrap;
}
.etab .close {
  visibility: hidden;
}
.etab.active {
  padding: 4px 16px 0 6px;
  border: 2px solid #b5b9cd;
  border-top: 0;
  border-bottom: 0;
  border-radius: 14px 14px 0 0;
  background: #fff;
}
.etab.active .close {
  visibility: visible;
}
.editor-tools {
  flex: 1;
  display: flex;
  justify-content: flex-end;
  border-bottom: 2px solid #b5b9cd;
}
.more {
  display: flex;
  align-items: flex-start;
  height: 40px;
  padding-top: 12px;
  color: #444;
}
.more svg {
  width: 16px;
  height: 12px;
  fill: none;
  stroke: #222;
  stroke-width: 2;
}
.more span {
  margin-top: 9px;
  font-size: 18px;
  line-height: 20px;
}
.editor-tools .win {
  padding: 14px 26px 0 44px;
}
.browser-bar {
  display: flex;
  align-items: center;
  gap: 12px;
  height: 58px;
  margin: 4px 4px 0;
  padding: 0 8px 0 10px;
  background: #d6d6d6;
}
.combo {
  flex: 1;
  display: flex;
  box-sizing: border-box;
  height: 48px;
  margin: 0 7px 6px 0;
  padding: 6px 3px 8px 6px;
  border-radius: 6px;
  background: #8bb5e6;
}
.combo input {
  flex: 1;
  min-width: 0;
  padding: 5px 6px 0;
  background: #fff;
  line-height: 26px;
}
.combo input::selection {
  background: #b3d7ff;
  color: #000;
}
.combo button {
  width: 31px;
  border-radius: 0 5px 5px 0;
  background: linear-gradient(#6db3fa, #187afd);
}
.combo svg {
  display: block;
  width: 14px;
  height: 10px;
  margin: 0 auto;
  fill: none;
  stroke: #fff;
  stroke-width: 2;
}
.go {
  margin-right: 12px;
}
.eclipse {
  flex: none;
  width: 42px;
  height: 42px;
}
.page {
  padding: 0 4px;
  font-family: 'Liberation Serif', serif;
  font-size: 32px;
  line-height: 34px;
}
.note {
  margin: 0;
  padding: 4px 10px;
}
</style>
